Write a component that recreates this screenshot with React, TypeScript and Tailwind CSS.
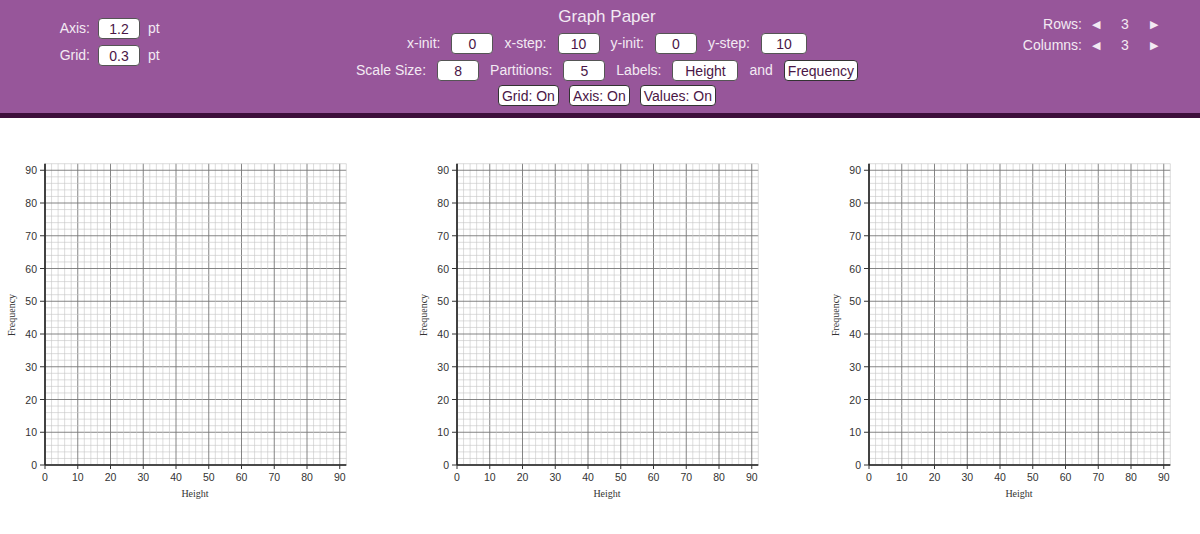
import React from "react";

const F = { fontFamily: '"Liberation Sans", Arial, sans-serif' };

function Box({ v, w = "w-[42px]" }: { v: string; w?: string }) {
  return (
    <span className={`inline-flex items-center justify-center h-[21px] ${w} bg-white border border-[#555] rounded-[4px] text-[#4a1646] text-[14px] leading-none`}>{v}</span>
  );
}
function Btn({ v }: { v: string }) {
  return (
    <span className="inline-flex items-center justify-center h-[21px] px-[3px] bg-white border border-[#333] rounded-[4px] text-[#4a1646] text-[14px] leading-none">{v}</span>
  );
}

function Graph() {
  const ox = 45, oy = 315, s = 3.275, max = 92;
  const lines: React.ReactNode[] = [];
  for (let i = 0; i <= max; i += 2) {
    const major = i % 10 === 0;
    const c = major ? "#777" : "#c4c4c4";
    const w = major ? 0.9 : 0.6;
    lines.push(<line key={"v" + i} x1={ox + i * s} y1={oy} x2={ox + i * s} y2={oy - max * s} stroke={c} strokeWidth={w} />);
    lines.push(<line key={"h" + i} x1={ox} y1={oy - i * s} x2={ox + max * s} y2={oy - i * s} stroke={c} strokeWidth={w} />);
  }
  const labels: React.ReactNode[] = [];
  for (let i = 0; i <= 90; i += 10) {
    labels.push(<text key={"x" + i} x={ox + i * s} y={oy + 16} fontSize="10.5" textAnchor="middle" fill="#333" style={F}>{i}</text>);
    labels.push(<text key={"y" + i} x={ox - 8} y={oy - i * s + 4} fontSize="10.5" textAnchor="end" fill="#333" style={F}>{i}</text>);
    labels.push(<line key={"tx" + i} x1={ox + i * s} y1={oy} x2={ox + i * s} y2={oy + 4} stroke="#333" strokeWidth={1} />);
    labels.push(<line key={"ty" + i} x1={ox - 5} y1={oy - i * s} x2={ox} y2={oy - i * s} stroke="#333" strokeWidth={1} />);
  }
  return (
    <svg width="412" height="380" className="shrink-0">
      {lines}
      <line x1={ox} y1={oy} x2={ox + max * s} y2={oy} stroke="#222" strokeWidth={1.6} />
      <line x1={ox} y1={oy} x2={ox} y2={oy - max * s} stroke="#222" strokeWidth={1.6} />
      {labels}
      <text x={ox + 150} y={oy + 32} fontSize="10" textAnchor="middle" fill="#333" style={{ fontFamily: '"Liberation Serif", serif' }}>Height</text>
      <text transform={`translate(15 ${oy - 150}) rotate(-90)`} fontSize="10" textAnchor="middle" fill="#333" style={{ fontFamily: '"Liberation Serif", serif' }}>Frequency</text>
    </svg>
  );
}

export default function App() {
  return (
    <div className="w-[1200px] h-[534px] bg-white overflow-hidden" style={F}>
      <div className="relative h-[113px] bg-[#97569a] text-[#f3eaf3] text-[14px]">
        <div className="absolute left-[58px] top-[18px] flex flex-col gap-[6px]">
          <div className="flex items-center gap-[8px]"><span className="w-[32px] text-right">Axis:</span><Box v="1.2" /><span>pt</span></div>
          <div className="flex items-center gap-[8px]"><span className="w-[32px] text-right">Grid:</span><Box v="0.3" /><span>pt</span></div>
        </div>
        <div className="absolute left-0 right-0 top-[6px] flex flex-col items-center gap-[6px] pl-[14px]">
          <div className="text-[17px] leading-[22px] -mb-[1px]">Graph Paper</div>
          <div className="flex items-center gap-[11px]"><span>x-init:</span><Box v="0" /><span>x-step:</span><Box v="10" /><span>y-init:</span><Box v="0" /><span>y-step:</span><Box v="10" w="w-[46px]" /></div>
          <div className="flex items-center gap-[11px]"><span>Scale Size:</span><Box v="8" /><span>Partitions:</span><Box v="5" /><span>Labels:</span><Box v="Height" w="w-[66px]" /><span>and</span><Btn v="Frequency" /></div>
          <div className="flex items-center gap-[10px] -mt-[2px]"><Btn v="Grid: On" /><Btn v="Axis: On" /><Btn v="Values: On" /></div>
        </div>
        <div className="absolute left-[1016px] top-[14px] flex flex-col gap-0">
          <div className="flex items-center"><span className="w-[66px] text-right">Rows:</span><span className="w-[28px] text-center text-[11px]">◀</span><span className="w-[30px] text-center">3</span><span className="w-[28px] text-center text-[11px]">▶</span></div>
          <div className="flex items-center"><span className="w-[66px] text-right">Columns:</span><span className="w-[28px] text-center text-[11px]">◀</span><span className="w-[30px] text-center">3</span><span className="w-[28px] text-center text-[11px]">▶</span></div>
        </div>
      </div>
      <div className="h-[5px] bg-[#3d0e3a]" />
      <div className="flex pt-[32px]">
        <Graph /><Graph /><Graph />
      </div>
    </div>
  );
}
